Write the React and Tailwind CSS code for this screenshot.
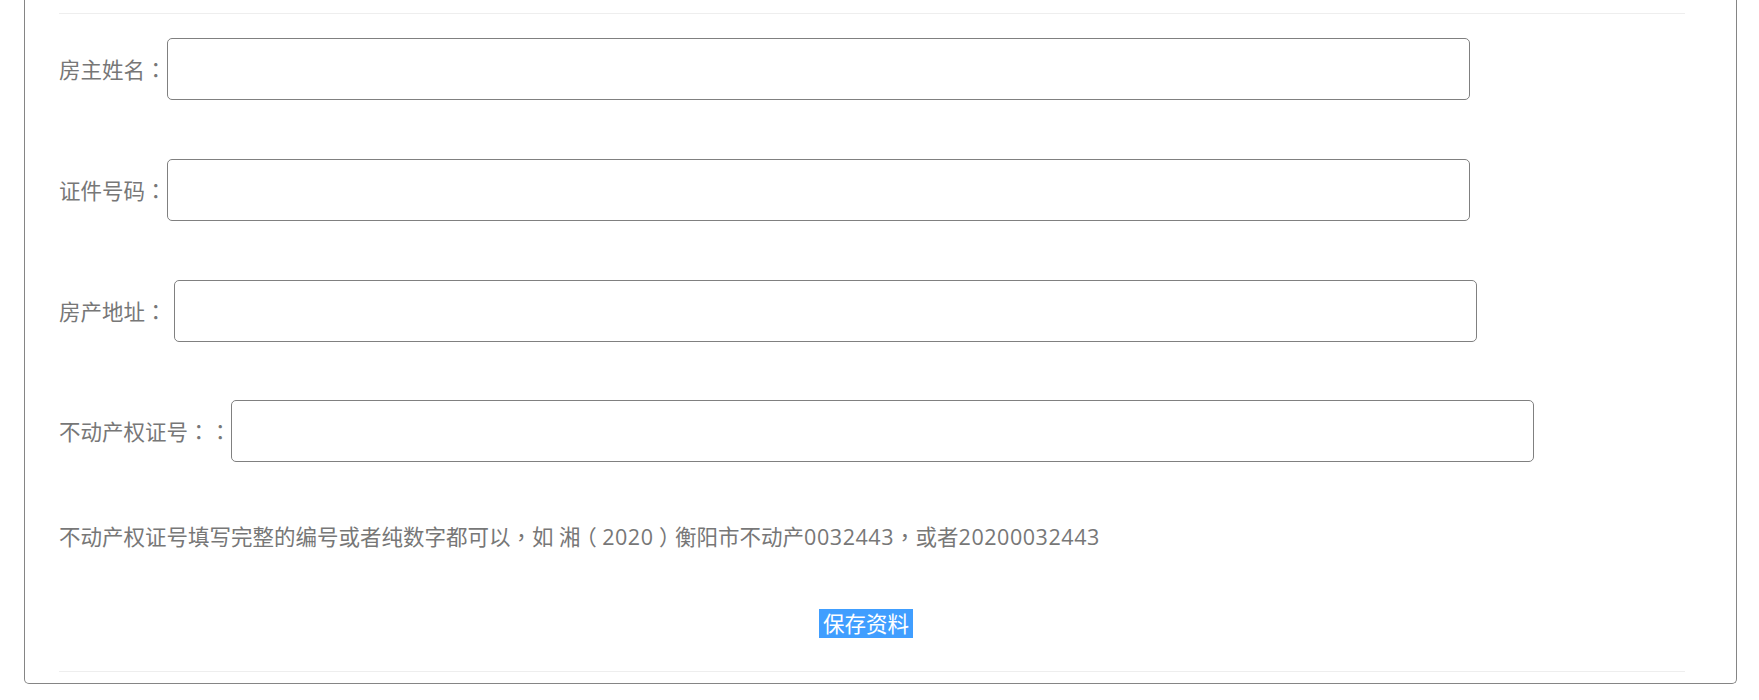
export default function App() {
  const font = { fontFamily: '"Open Sans", "Noto Sans CJK SC", sans-serif' };
  const P = ({ c }) => (
    <span className="[font-family:'Noto_Sans_CJK_TC',sans-serif]">{c}</span>
  );
  const B = ({ c }) => (
    <span className="px-[5.4px] [font-feature-settings:'halt']">{c}</span>
  );
  const N = ({ c }) => <span className="tracking-[0.55px]">{c}</span>;
  const rows = [
    { label: "房主姓名", colons: "：", mt: "mt-[24px]", extra: "" },
    { label: "证件号码", colons: "：", mt: "mt-[59px]", extra: "" },
    { label: "房产地址", colons: "：", mt: "mt-[59px]", extra: "pr-[7px]" },
    { label: "不动产权证号", colons: "：：", mt: "mt-[58px]", extra: "" },
  ];
  return (
    <div className="min-h-screen bg-white [text-spacing-trim:space-all]" style={font}>
      <div className="ml-[24px] w-[1713px] border-x border-b border-[#858585] rounded-b-[5px] pl-[34px] pr-[51px] pt-[13px] pb-[11px]">
        <div className="h-px bg-[#eeeeee]" />
        {rows.map((r) => (
          <div key={r.label} className={`flex items-center ${r.mt}`}>
            <span className={`text-[21.5px] leading-[30px] text-[#777777] whitespace-nowrap ${r.extra}`}>
              {r.label}
              <P c={r.colons} />
            </span>
            <input
              type="text"
              className="w-[1303px] h-[62px] border border-[#808080] rounded-[5px] bg-white outline-none px-3 text-[18px]"
            />
          </div>
        ))}
        <p className="mt-[58px] text-[21.5px] leading-[32px] text-[#777777] whitespace-nowrap">
          不动产权证号填写完整的编号或者纯数字都可以<P c="，" />如 湘<B c="（" /><N c="2020" /><B c="）" />衡阳市不动产<N c="0032443" /><P c="，" />或者<N c="20200032443" />
        </p>
        <div className="mt-[56px] flex justify-center pr-[12px]">
          <button className="bg-[#409eff] text-white text-[21.5px] leading-[29px] h-[29px] px-[4px]">
            保存资料
          </button>
        </div>
        <div className="mt-[33px] h-px bg-[#eeeeee]" />
      </div>
    </div>
  );
}
